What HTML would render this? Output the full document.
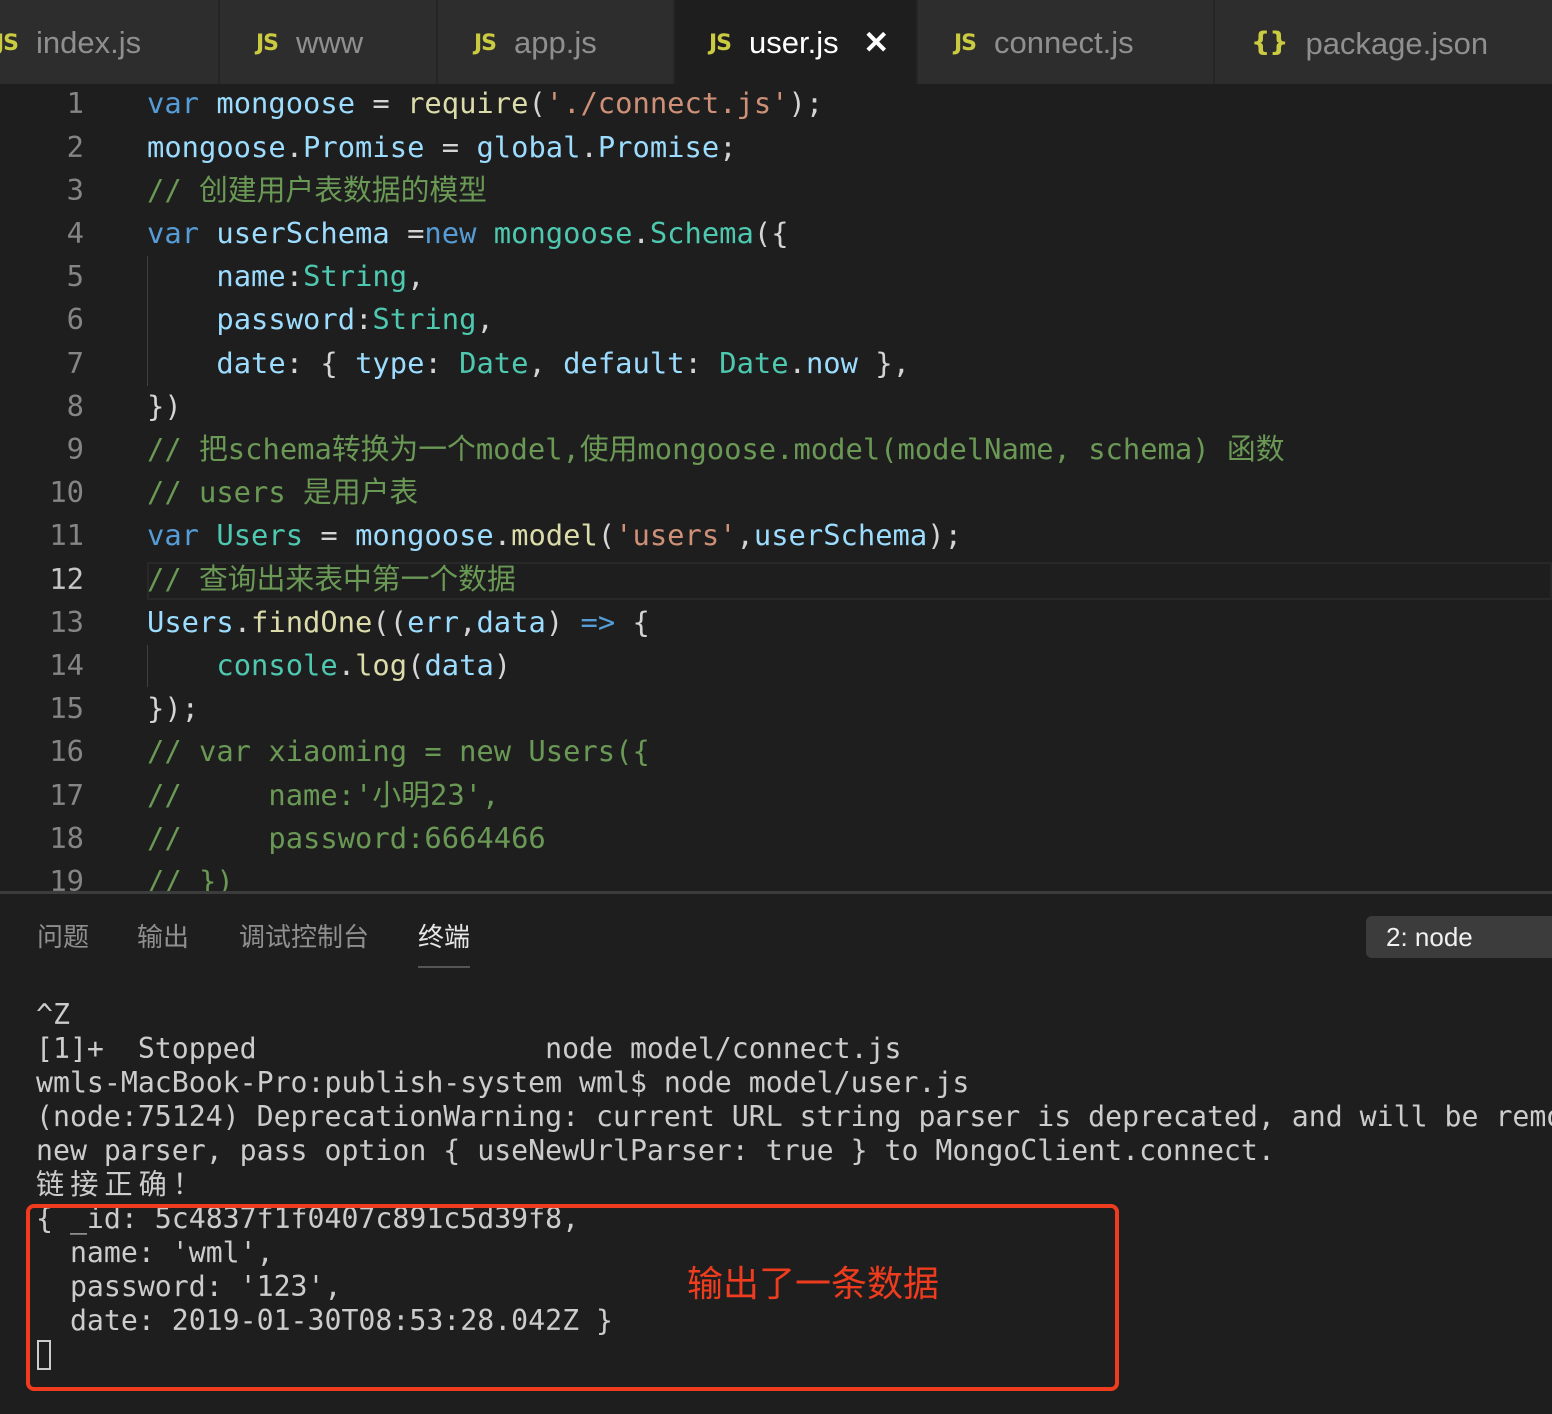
<!DOCTYPE html><html><head><meta charset="utf-8"><style>
*{margin:0;padding:0;box-sizing:border-box}
body{width:1552px;height:1414px;background:#1e1e1e;overflow:hidden;position:relative;font-family:"Liberation Sans","Noto Sans CJK SC",sans-serif}
.tabs{position:absolute;left:0;top:0;width:1552px;height:84px;background:#252526}
.tab{position:absolute;top:0;height:84px;background:#2d2d2d;color:#8f8f8f;font-size:31px;line-height:86px;white-space:nowrap}
.tab b{color:#cbcb41;font-weight:bold;font-size:22px;margin-right:18px;font-family:"DejaVu Sans",sans-serif;letter-spacing:-1px;vertical-align:3px}
.tab.act{background:#1e1e1e;color:#fff}
.code{position:absolute;left:0;top:0;font-family:"DejaVu Sans Mono","Noto Sans CJK SC",monospace;font-size:28.8px}
.ln{position:absolute;left:0;width:84px;text-align:right;color:#858585;height:43px;line-height:43px}
.cl{position:absolute;left:147px;height:43px;line-height:43px;white-space:pre;color:#d4d4d4}
.k{color:#569cd6}.v{color:#9cdcfe}.f{color:#dcdcaa}.s{color:#ce9178}.c{color:#6a9955}.t{color:#4ec9b0}
.guide{position:absolute;left:147px;width:1px;background:#404040}
.term{position:absolute;left:36px;font-family:"DejaVu Sans Mono","Noto Sans CJK SC",monospace;font-size:28.2px;color:#cccccc;white-space:pre;line-height:34px}
</style></head><body>
<div class="tabs">
<div class="tab" style="left:-4px;width:222px"><b>JS</b>index.js</div>
<div class="tab" style="left:220px;width:216px;padding-left:36px"><b>JS</b>www</div>
<div class="tab" style="left:438px;width:235px;padding-left:36px"><b>JS</b>app.js</div>
<div class="tab act" style="left:675px;width:241px;padding-left:34px"><b>JS</b>user.js <span style="margin-left:16px;font-weight:bold">✕</span></div>
<div class="tab" style="left:918px;width:295px;padding-left:36px"><b>JS</b>connect.js</div>
<div class="tab" style="left:1215px;width:337px;padding-left:36px"><b style="font-size:27px">{}</b>package.json</div>
</div>
<div style="position:absolute;left:147px;top:562px;width:1405px;height:38px;border:2px solid #282828"></div>
<div class="guide" style="top:256px;height:130px"></div>
<div class="guide" style="top:645px;height:42px"></div>
<div class="code">
<div class="ln" style="top:82px">1</div><div class="cl" style="top:82px"><span class="k">var</span> <span class="v">mongoose</span> = <span class="f">require</span>(<span class="s">'./connect.js'</span>);</div>
<div class="ln" style="top:126px">2</div><div class="cl" style="top:126px"><span class="v">mongoose</span>.<span class="v">Promise</span> = <span class="v">global</span>.<span class="v">Promise</span>;</div>
<div class="ln" style="top:169px">3</div><div class="cl c" style="top:169px">// 创建用户表数据的模型</div>
<div class="ln" style="top:212px">4</div><div class="cl" style="top:212px"><span class="k">var</span> <span class="v">userSchema</span> =<span class="k">new</span> <span class="t">mongoose</span>.<span class="t">Schema</span>({</div>
<div class="ln" style="top:255px">5</div><div class="cl" style="top:255px">    <span class="v">name</span>:<span class="t">String</span>,</div>
<div class="ln" style="top:298px">6</div><div class="cl" style="top:298px">    <span class="v">password</span>:<span class="t">String</span>,</div>
<div class="ln" style="top:342px">7</div><div class="cl" style="top:342px">    <span class="v">date</span>: { <span class="v">type</span>: <span class="t">Date</span>, <span class="v">default</span>: <span class="t">Date</span>.<span class="v">now</span> },</div>
<div class="ln" style="top:385px">8</div><div class="cl" style="top:385px">})</div>
<div class="ln" style="top:428px">9</div><div class="cl c" style="top:428px">// 把schema转换为一个model,使用mongoose.model(modelName, schema) 函数</div>
<div class="ln" style="top:471px">10</div><div class="cl c" style="top:471px">// users 是用户表</div>
<div class="ln" style="top:514px">11</div><div class="cl" style="top:514px"><span class="k">var</span> <span class="t">Users</span> = <span class="v">mongoose</span>.<span class="f">model</span>(<span class="s">'users'</span>,<span class="v">userSchema</span>);</div>
<div class="ln" style="top:558px;color:#c6c6c6">12</div><div class="cl c" style="top:558px">// 查询出来表中第一个数据</div>
<div class="ln" style="top:601px">13</div><div class="cl" style="top:601px"><span class="v">Users</span>.<span class="f">findOne</span>((<span class="v">err</span>,<span class="v">data</span>) <span class="k">=&gt;</span> {</div>
<div class="ln" style="top:644px">14</div><div class="cl" style="top:644px">    <span class="t">console</span>.<span class="f">log</span>(<span class="v">data</span>)</div>
<div class="ln" style="top:687px">15</div><div class="cl" style="top:687px">});</div>
<div class="ln" style="top:730px">16</div><div class="cl c" style="top:730px">// var xiaoming = new Users({</div>
<div class="ln" style="top:774px">17</div><div class="cl c" style="top:774px">//     name:'小明23',</div>
<div class="ln" style="top:817px">18</div><div class="cl c" style="top:817px">//     password:6664466</div>
<div class="ln" style="top:860px">19</div><div class="cl c" style="top:860px">// })</div>
</div>
<div style="position:absolute;left:0;top:891px;width:1552px;height:523px;background:#1e1e1e;border-top:3px solid #3c3c3c"></div>
<div style="position:absolute;top:918px;left:37px;font-size:26px;color:#8f8f8f;white-space:nowrap;line-height:38px">
<span style="position:absolute;left:0">问题</span><span style="position:absolute;left:100px">输出</span><span style="position:absolute;left:202px">调试控制台</span><span style="position:absolute;left:381px;color:#e7e7e7">终端</span></div>
<div style="position:absolute;left:418px;top:966px;width:52px;height:2px;background:#555"></div>
<div style="position:absolute;left:1366px;top:916px;width:200px;height:42px;background:#3c3c3c;border-radius:6px;color:#f0f0f0;font-size:26px;line-height:42px;padding-left:20px">2: node</div>
<div class="term" style="top:998px">^Z
[1]+  Stopped                 node model/connect.js
wmls-MacBook-Pro:publish-system wml$ node model/user.js
(node:75124) DeprecationWarning: current URL string parser is deprecated, and will be removed
new parser, pass option { useNewUrlParser: true } to MongoClient.connect.
<span style="letter-spacing:6px">链接正确！</span>
{ _id: 5c4837f1f0407c891c5d39f8,
  name: 'wml',
  password: '123',
  date: 2019-01-30T08:53:28.042Z }</div>
<div style="position:absolute;left:37px;top:1340px;width:14px;height:30px;border:2px solid #ccc"></div>
<div style="position:absolute;left:26px;top:1204px;width:1093px;height:187px;border:4px solid #f03c1e;border-radius:8px"></div>
<div style="position:absolute;left:687px;top:1262px;font-size:36px;color:#f03c1e;line-height:44px">输出了一条数据</div>
</body></html>
